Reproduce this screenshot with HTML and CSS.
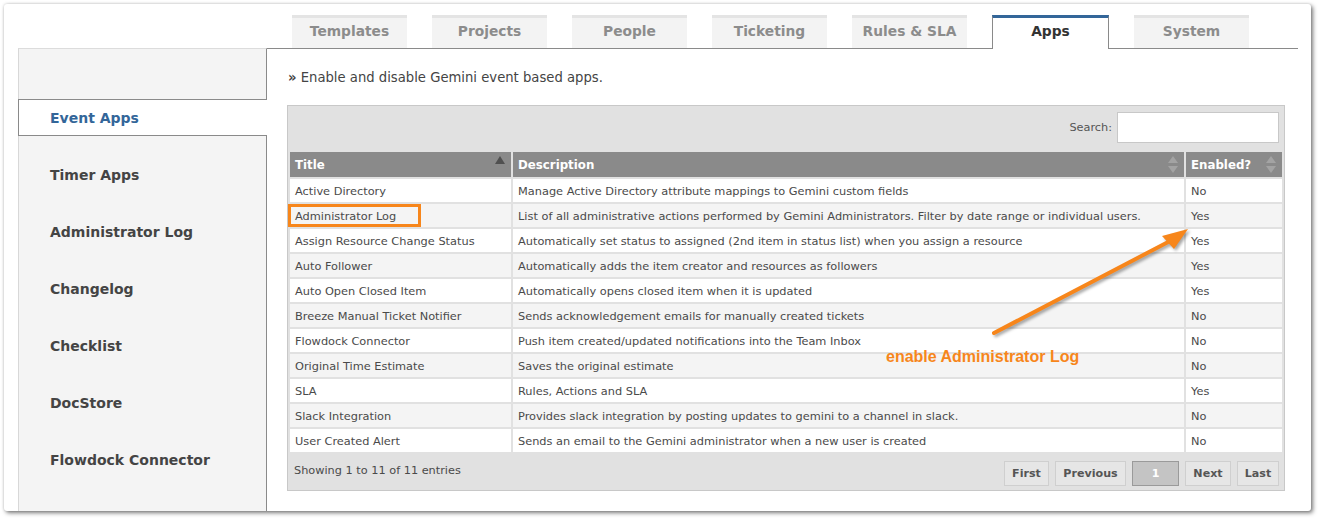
FILE: index.html
```html
<!DOCTYPE html>
<html>
<head>
<meta charset="utf-8">
<link rel="stylesheet" href="styles.css">
</head>
<body>
<div class="panel">
  <nav class="tabs">
    <div class="tab">Templates</div>
    <div class="tab">Projects</div>
    <div class="tab">People</div>
    <div class="tab">Ticketing</div>
    <div class="tab">Rules &amp; SLA</div>
    <div class="tab active">Apps</div>
    <div class="tab">System</div>
  </nav>
  <div class="main">
    <aside class="sidebar">
      <div class="nav-item active">Event Apps</div>
      <div class="nav-item">Timer Apps</div>
      <div class="nav-item">Administrator Log</div>
      <div class="nav-item">Changelog</div>
      <div class="nav-item">Checklist</div>
      <div class="nav-item">DocStore</div>
      <div class="nav-item">Flowdock Connector</div>
    </aside>
    <section class="content">
      <p class="intro"><span class="raquo">»</span> Enable and disable Gemini event based apps.</p>
      <div class="dt-wrap">
        <div class="dt-top">
          <label class="search">Search: <input type="text" class="search-input"></label>
        </div>
        <table class="dt">
          <thead>
            <tr>
              <th class="col-title">Title<span class="sort-up"></span></th>
              <th class="col-desc">Description<span class="sort-both"></span></th>
              <th class="col-en">Enabled?<span class="sort-both"></span></th>
            </tr>
          </thead>
          <tbody>
            <tr><td>Active Directory</td><td>Manage Active Directory attribute mappings to Gemini custom fields</td><td>No</td></tr>
            <tr><td>Administrator Log</td><td>List of all administrative actions performed by Gemini Administrators. Filter by date range or individual users.</td><td>Yes</td></tr>
            <tr><td>Assign Resource Change Status</td><td>Automatically set status to assigned (2nd item in status list) when you assign a resource</td><td>Yes</td></tr>
            <tr><td>Auto Follower</td><td>Automatically adds the item creator and resources as followers</td><td>Yes</td></tr>
            <tr><td>Auto Open Closed Item</td><td>Automatically opens closed item when it is updated</td><td>Yes</td></tr>
            <tr><td>Breeze Manual Ticket Notifier</td><td>Sends acknowledgement emails for manually created tickets</td><td>No</td></tr>
            <tr><td>Flowdock Connector</td><td>Push item created/updated notifications into the Team Inbox</td><td>No</td></tr>
            <tr><td>Original Time Estimate</td><td>Saves the original estimate</td><td>No</td></tr>
            <tr><td>SLA</td><td>Rules, Actions and SLA</td><td>Yes</td></tr>
            <tr><td>Slack Integration</td><td>Provides slack integration by posting updates to gemini to a channel in slack.</td><td>No</td></tr>
            <tr><td>User Created Alert</td><td>Sends an email to the Gemini administrator when a new user is created</td><td>No</td></tr>
          </tbody>
        </table>
        <div class="dt-bottom">
          <span class="info">Showing 1 to 11 of 11 entries</span>
          <div class="paging">
            <span class="pbtn p-first">First</span>
            <span class="pbtn p-prev">Previous</span>
            <span class="pbtn p-cur">1</span>
            <span class="pbtn p-next">Next</span>
            <span class="pbtn p-last">Last</span>
          </div>
        </div>
      </div>
    </section>
  </div>
</div>
<svg class="annot" width="1318" height="520" viewBox="0 0 1318 520" xmlns="http://www.w3.org/2000/svg">
  <rect x="289.5" y="205.5" width="130" height="20" fill="none" stroke="#f7861b" stroke-width="3"/>
  <g class="arrow">
    <line x1="994" y1="333" x2="1172" y2="240" stroke="#f7861b" stroke-width="4" stroke-linecap="round"/>
    <polygon points="1188,229 1162,236 1174,249" fill="#f7861b"/>
  </g>
</svg>
<div class="callout">enable Administrator Log</div>
</body>
</html>
```
FILE: styles.css
```css
html, body {
  margin: 0;
  padding: 0;
  background: #ffffff;
}
body {
  font-family: "DejaVu Sans", Verdana, sans-serif;
  color: #444;
  width: 1318px;
  height: 520px;
  overflow: hidden;
  position: relative;
}
.panel {
  margin: 4px 0 0 4px;
  width: 1307px;
  height: 507px;
  background: #fff;
  border-radius: 3px;
  box-shadow: 2px 2px 4px rgba(0,0,0,0.5), 0 0 3px rgba(0,0,0,0.18);
  padding-top: 11px;
  box-sizing: border-box;
  display: flex;
  flex-direction: column;
}
.tabs {
  display: flex;
  padding-left: 288px;
  height: 33px;
  position: relative;
  z-index: 2;
}
.tab {
  width: 115px;
  margin-right: 25px;
  box-sizing: border-box;
  height: 33px;
  background: #f3f3f3;
  border-top: 3px solid #e4e4e4;
  color: #8c8c8c;
  font-weight: bold;
  font-size: 13.8px;
  text-align: center;
  line-height: 27px;
}
.tab.active {
  width: 117px;
  height: 34px;
  background: #fff;
  border-top-color: #336699;
  border-left: 1px solid #8a8a8a;
  border-right: 1px solid #8a8a8a;
  color: #333;
}
.main {
  flex: 1;
  display: flex;
  padding-left: 14px;
  padding-right: 13px;
}
.sidebar {
  width: 249px;
  box-sizing: border-box;
  background: #f4f4f4;
  border-top: 1px solid #dcdcdc;
  border-left: 1px solid #d8d8d8;
  border-right: 1px solid #8a8a8a;
  padding-top: 50px;
}
.nav-item {
  height: 37px;
  box-sizing: border-box;
  margin-bottom: 20px;
  padding-left: 30px;
  font-weight: bold;
  font-size: 14px;
  line-height: 36px;
  color: #444;
  border: 1px solid transparent;
  border-right: 0;
}
.nav-item.active {
  background: #fff;
  border-color: #8a8a8a;
  margin-left: -1px;
  margin-right: -1px;
  padding-left: 31px;
  color: #336699;
}
.content {
  flex: 1;
  border-top: 1px solid #8a8a8a;
  padding: 19px 13px 0 20px;
}
.intro {
  margin: 0 0 18px 1px;
  font-size: 13.2px;
  line-height: 19px;
  color: #444;
}
.raquo {
  font-weight: bold;
}
.dt-wrap {
  border: 1px solid #c8c8c8;
  background: #e1e1e1;
}
.dt-top {
  display: flex;
  justify-content: flex-end;
  padding: 6px 5px 0 0;
  height: 31px;
  margin-bottom: 7px;
}
.search {
  font-size: 11.3px;
  color: #555;
  display: flex;
  align-items: center;
  gap: 5px;
}
.search-input {
  width: 162px;
  height: 31px;
  box-sizing: border-box;
  border: 1px solid #c8c8c8;
  background: #fff;
  margin: 0;
  padding: 0;
}
.dt {
  border-collapse: separate;
  border-spacing: 2px;
  width: 996px;
  font-size: 11.35px;
  table-layout: fixed;
}
.dt th {
  background: #8a8a8a;
  color: #fff;
  font-weight: bold;
  font-size: 11.8px;
  text-align: left;
  height: 25px;
  padding: 0 5px;
  position: relative;
  box-sizing: border-box;
}
.col-title { width: 221px; }
.col-en { width: 96px; }
.dt td {
  height: 23px;
  padding: 0 5px;
  color: #4a4a4a;
  background: #fff;
  white-space: nowrap;
  box-sizing: border-box;
}
.dt tbody tr:nth-child(even) td {
  background: #f4f4f4;
}
.sort-up {
  position: absolute;
  right: 6px;
  top: 4px;
  width: 0;
  height: 0;
  border-left: 5px solid transparent;
  border-right: 5px solid transparent;
  border-bottom: 8px solid #505050;
}
.sort-both {
  position: absolute;
  right: 6px;
  top: 4px;
  width: 10px;
  height: 17px;
}
.sort-both::before, .sort-both::after {
  content: "";
  position: absolute;
  left: 0;
  width: 0;
  height: 0;
  border-left: 5px solid transparent;
  border-right: 5px solid transparent;
}
.sort-both::before {
  top: 0;
  border-bottom: 7px solid #a3a3a3;
}
.sort-both::after {
  bottom: 0;
  border-top: 7px solid #a3a3a3;
}
.dt-bottom {
  display: flex;
  justify-content: space-between;
  align-items: center;
  padding: 0 5px 0 6px;
  height: 36px;
}
.info {
  font-size: 11.3px;
  color: #4a4a4a;
  margin-top: -4px;
}
.paging {
  display: flex;
  gap: 6px;
  margin-top: 2px;
}
.pbtn {
  height: 25px;
  box-sizing: border-box;
  border: 1px solid #cfcfcf;
  background: #e6e6e6;
  color: #555;
  font-weight: bold;
  font-size: 11.1px;
  line-height: 23px;
  text-align: center;
}
.p-first { width: 45px; }
.p-prev { width: 71px; }
.p-cur {
  width: 47px;
  background: #c4c4c4;
  border-color: #9a9a9a;
  color: #fff;
}
.p-next { width: 46px; }
.p-last { width: 42px; }
.annot {
  position: absolute;
  left: 0;
  top: 0;
  pointer-events: none;
}
.arrow {
  filter: drop-shadow(2px 2px 1.5px rgba(0,0,0,0.35));
}
.callout {
  position: absolute;
  left: 886px;
  top: 347px;
  font-family: "Liberation Sans", Arial, sans-serif;
  font-weight: bold;
  font-size: 16px;
  letter-spacing: 0;
  color: #f7861b;
  line-height: 20px;
}
```
